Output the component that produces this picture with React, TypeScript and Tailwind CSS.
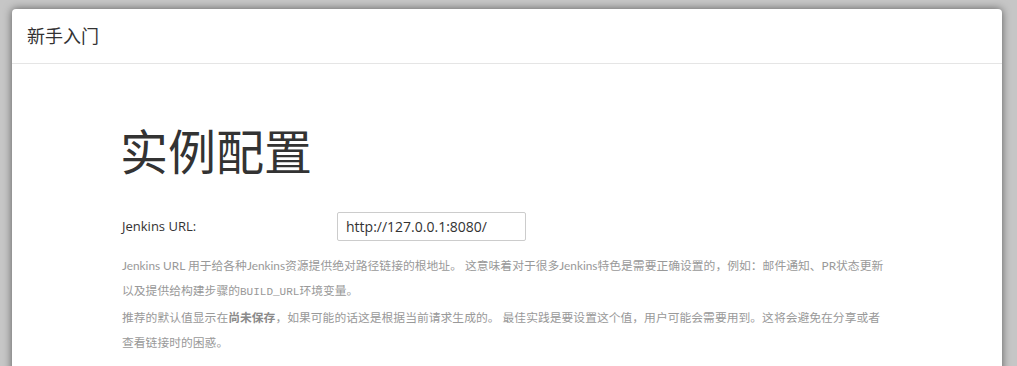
const cjk = "font-['Open_Sans','Noto_Sans_CJK_SC',sans-serif]";

const Hint = () => (
  <div className="mt-[12px] text-[11.8px] leading-[25px] text-[#999999] font-['Lato','Noto_Sans_CJK_SC',sans-serif]">
    <p>
      Jenkins URL 用于给各种Jenkins资源提供绝对路径链接的根地址。 这意味着对于很多Jenkins特色是需要正确设置的，例如：邮件通知、PR状态更新
      <br />
      以及提供给构建步骤的
      <code className="font-['Liberation_Mono',monospace] text-[11px]">BUILD_URL</code>
      环境变量。
    </p>
    <p>
      推荐的默认值显示在<strong className="font-bold text-[#8a8a8a]">尚未保存</strong>，如果可能的话这是根据当前请求生成的。 最佳实践是要设置这个值，用户可能会需要用到。这将会避免在分享或者
      <br />
      查看链接时的困惑。
    </p>
  </div>
);

const App = () => {
  return (
    <div className={`w-[1017px] h-[366px] overflow-hidden bg-[#c6c6c6] pt-[9px] pl-[12px] pr-[15px] ${cjk}`}>
      <div className="h-[400px] bg-white rounded-t-[4px] shadow-[0_0_8px_rgba(0,0,0,0.55)]">
        {/* Header */}
        <div className="h-[55px] border-b border-[#e5e5e5] flex items-center pl-[15px]">
          <h4 className="text-[18px] text-[#333333]">新手入门</h4>
        </div>
        {/* Body */}
        <div className="pl-[110px] pt-[60px]">
          <h1 className="text-[48px] leading-[56px] text-[#333333] -ml-[2px]">实例配置</h1>
          <div className="flex items-center mt-[32px]">
            <label className="w-[215px] text-[13px] text-[#333333]">Jenkins URL:</label>
            <input
              readOnly
              value="http://127.0.0.1:8080/"
              className="w-[189px] h-[29px] border border-[#cccccc] rounded-[2px] px-[8px] text-[14px] text-[#333333] outline-none"
            />
          </div>
          <Hint />
        </div>
      </div>
    </div>
  );
};

export default App;
